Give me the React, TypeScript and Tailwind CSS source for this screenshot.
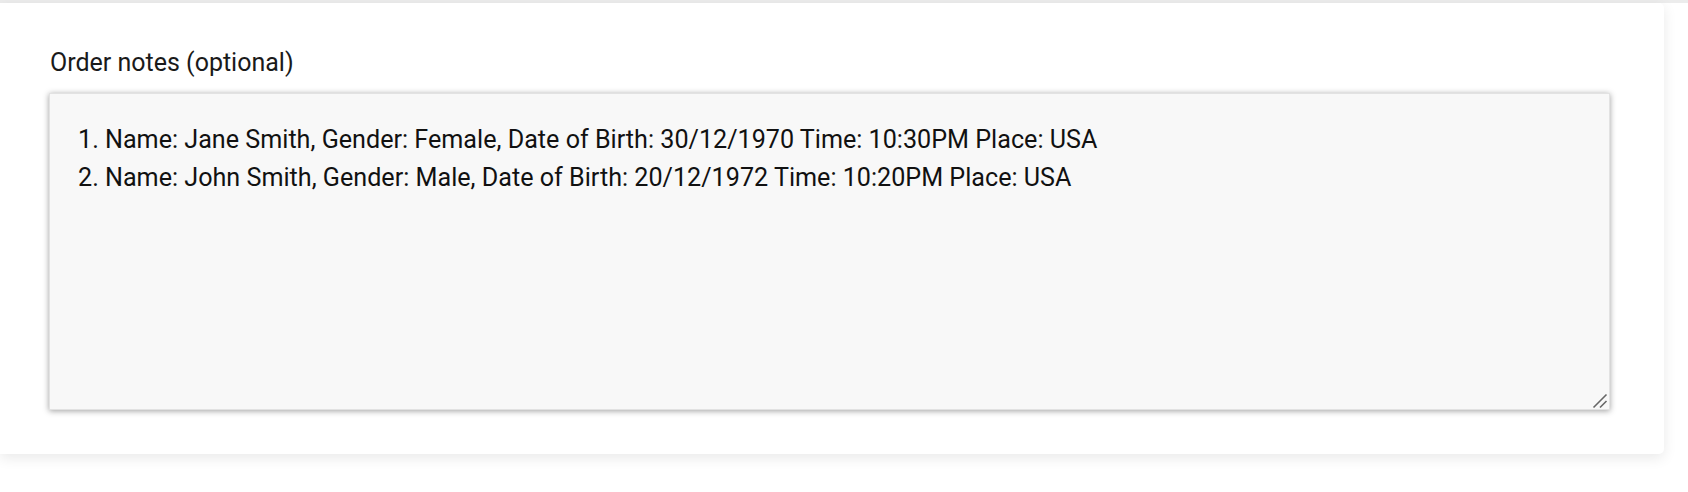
import React from "react";

export default function App() {
  const value =
    "1. Name: Jane Smith, Gender: Female, Date of Birth: 30/12/1970 Time: 10:30PM Place: USA\n2. Name: John Smith, Gender: Male, Date of Birth: 20/12/1972 Time: 10:20PM Place: USA";
  return (
    <div className="w-[1688px] h-[492px] bg-white overflow-hidden" style={{ fontFamily: "Roboto, 'Liberation Sans', sans-serif" }}>
      <div className="h-[3px] bg-[#ececec]" />
      <div className="w-[1664px] h-[451px] bg-white rounded-r-[5px] shadow-[0_4px_14px_rgba(0,0,0,0.09)] pl-[49px] pr-[54px] pt-[44px]">
        <label className="block text-[25px] leading-[32px] text-[#1a1a1a] ml-[1px]">Order notes (optional)</label>
        <div className="relative mt-[14px] w-[1561px] h-[317px]">
          <textarea
            defaultValue={value}
            className="block w-full h-full resize-none bg-[#f8f8f8] border border-[#e2e2e2] shadow-[0_1px_6px_rgba(0,0,0,0.38)] pl-[28px] pr-[20px] pt-[27px] text-[25.15px] leading-[38px] text-[#111] outline-none"
            style={{ fontFamily: "Roboto, 'Liberation Sans', sans-serif" }}
          />
          <svg className="absolute right-[2px] bottom-[1px] pointer-events-none" width="16" height="16" viewBox="0 0 16 16">
            <line x1="1.5" y1="14.5" x2="14.5" y2="1.5" stroke="#666" strokeWidth="1.6" />
            <line x1="8" y1="14.5" x2="14.5" y2="8" stroke="#666" strokeWidth="1.6" />
          </svg>
        </div>
      </div>
    </div>
  );
}
